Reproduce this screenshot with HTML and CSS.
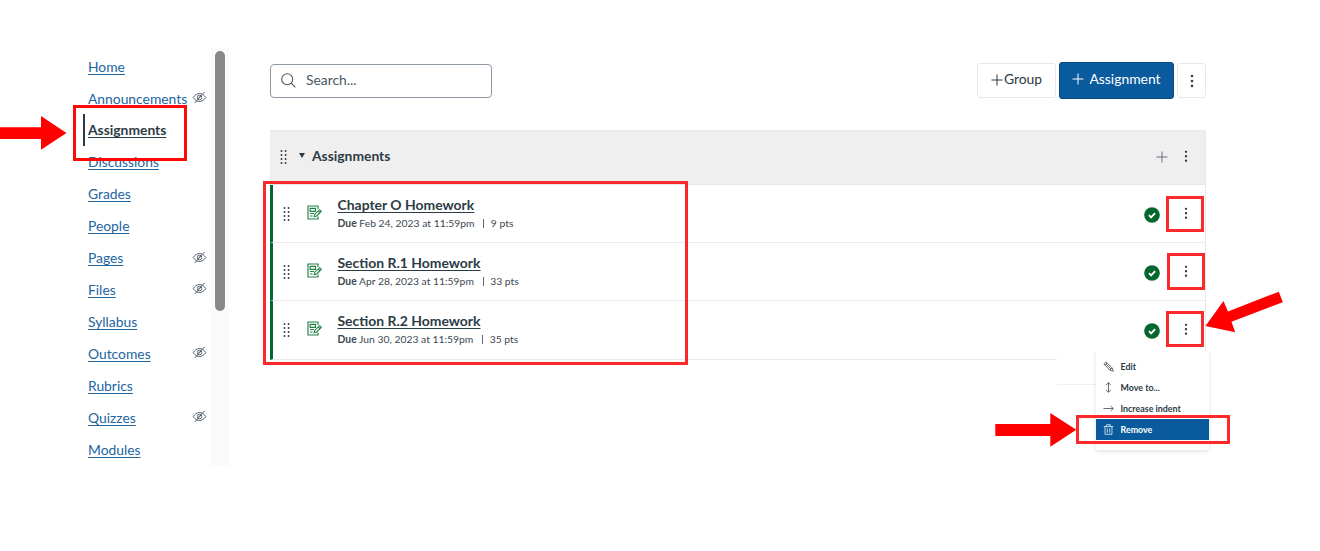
FILE: index.html
```
<!DOCTYPE html>
<html lang="en">
<head>
<meta charset="utf-8">
<title>Assignments</title>
<link rel="stylesheet" href="styles.css">
</head>
<body>
<svg width="0" height="0" class="defs" aria-hidden="true">
  <symbol id="hidden" viewBox="0 0 14 13"><g fill="none" stroke="currentColor" stroke-width="1"><path d="M.7 6.5C2.3 4.2 4.500 2.500 7 2.500s4.700 1.700 6.300 4C11.700 8.800 9.500 10.500 7 10.500S2.300 8.800.7 6.500z"/><ellipse cx="7" cy="6.500" rx="2.200" ry="2.400"/><path d="M2.300 12 12.200.8M5.800 7.300l2-2.200"/></g></symbol>
  <symbol id="grip" viewBox="0 0 7 14"><path d="M1.500 1v13M5.600 1v13" fill="none" stroke="currentColor" stroke-width="1.900" stroke-linecap="round" stroke-dasharray="0 4"/></symbol>
  <symbol id="kebab" viewBox="0 0 4 14"><g fill="currentColor"><circle cx="2" cy="2" r="1.300"/><circle cx="2" cy="7" r="1.300"/><circle cx="2" cy="12" r="1.300"/></g></symbol>
  <symbol id="plus" viewBox="0 0 12 12"><path d="M6 .5v11M.5 6h11" stroke="currentColor" stroke-width="1" fill="none"/></symbol>
  <symbol id="sheet" viewBox="0 0 15 15"><g fill="none" stroke="currentColor" stroke-width="1.150"><path d="M11 4V1H1v13h10v-2.500"/><path d="M3.200 3.300h5.300v3H3.200zM3 8.500h4M3 11h2.500"/><path d="m7.200 11.700.6-2.500 4.800-4.500 1.700 1.700-4.700 4.600zM11.200 6l1.600 1.700"/></g></symbol>
  <symbol id="check" viewBox="0 0 16 16"><circle cx="8" cy="8" r="7.800" fill="#03672e"/><path d="m5 8.200 2.100 2.100 4-4.200" fill="none" stroke="#fff" stroke-width="1.900"/></symbol>
</svg>
<div class="page">
  <nav class="sidebar">
    <a class="nav" href="#">Home</a>
    <a class="nav" href="#">Announcements<svg><use href="#hidden"/></svg></a>
    <a class="nav active" href="#">Assignments</a>
    <a class="nav" href="#">Discussions</a>
    <a class="nav" href="#">Grades</a>
    <a class="nav" href="#">People</a>
    <a class="nav" href="#">Pages<svg><use href="#hidden"/></svg></a>
    <a class="nav" href="#">Files<svg><use href="#hidden"/></svg></a>
    <a class="nav" href="#">Syllabus</a>
    <a class="nav" href="#">Outcomes<svg><use href="#hidden"/></svg></a>
    <a class="nav" href="#">Rubrics</a>
    <a class="nav" href="#">Quizzes<svg><use href="#hidden"/></svg></a>
    <a class="nav" href="#">Modules</a>
  </nav>
  <div class="track"><div class="thumb"></div></div>
  <main class="main">
    <div class="toolbar">
      <div class="search"><svg viewBox="0 0 15 15"><g fill="none" stroke="currentColor" stroke-width="1.100"><circle cx="6.200" cy="6.200" r="5.500"/><path d="m10.200 10.200 4.100 4.100"/></g></svg><span>Search...</span></div>
      <button class="btn group"><svg class="plus"><use href="#plus"/></svg><span>Group</span></button>
      <button class="btn primary"><svg class="plus"><use href="#plus"/></svg><span>Assignment</span></button>
      <button class="btn more"><svg class="kebab"><use href="#kebab"/></svg></button>
    </div>
    <section class="panel">
      <header class="head"><svg class="grip"><use href="#grip"/></svg><i class="caret"></i><h2>Assignments</h2><svg class="plus"><use href="#plus"/></svg><svg class="kebab"><use href="#kebab"/></svg></header>
      <article class="row"><svg class="grip"><use href="#grip"/></svg><svg class="sheet"><use href="#sheet"/></svg><div class="info"><a href="#">Chapter O Homework</a><p><b>Due</b> Feb 24, 2023 at 11:59pm <i></i> 9 pts</p></div><svg class="check"><use href="#check"/></svg><svg class="kebab"><use href="#kebab"/></svg></article>
      <article class="row"><svg class="grip"><use href="#grip"/></svg><svg class="sheet"><use href="#sheet"/></svg><div class="info"><a href="#">Section R.1 Homework</a><p><b>Due</b> Apr 28, 2023 at 11:59pm <i></i> 33 pts</p></div><svg class="check"><use href="#check"/></svg><svg class="kebab"><use href="#kebab"/></svg></article>
      <article class="row"><svg class="grip"><use href="#grip"/></svg><svg class="sheet"><use href="#sheet"/></svg><div class="info"><a href="#">Section R.2 Homework</a><p><b>Due</b> Jun 30, 2023 at 11:59pm <i></i> 35 pts</p></div><svg class="check"><use href="#check"/></svg><svg class="kebab"><use href="#kebab"/></svg></article>
    </section>
  </main>
</div>
<div class="popup">
  <div class="rules"></div>
  <div class="menu">
    <div class="item"><svg viewBox="0 0 12 12"><g fill="none" stroke="currentColor" stroke-width=".8"><path d="M1 3.200 3.200 1l6.800 6.500 1.200 3.700-3.700-1.200zM2.200 4.400l2.200-2.200M7.500 10 10 7.500M3.500 3.500l5.300 5.300"/></g></svg>Edit</div>
    <div class="item"><svg viewBox="0 0 12 12"><path d="M6 1v10M3.300 3.400 6 .8l2.700 2.600M3.300 8.600 6 11.200l2.700-2.600" fill="none" stroke="currentColor" stroke-width=".8"/></svg>Move to...</div>
    <div class="item"><svg viewBox="0 0 12 12"><path d="M.5 6h10.500M8.300 3.200 11.200 6 8.300 8.800" fill="none" stroke="currentColor" stroke-width=".8"/></svg>Increase indent</div>
    <div class="item selected"><svg viewBox="0 0 12 12"><path d="M.8 2.800h10.400M4 2.800V.8h4v2M2.200 2.800v8.400h7.600V2.800M4.700 4.700v4.800M7.300 4.700v4.800" fill="none" stroke="currentColor" stroke-width=".8"/></svg>Remove</div>
  </div>
</div>
<div class="mark mark-nav"></div>
<div class="mark mark-list"></div>
<div class="mark mark-k1"></div>
<div class="mark mark-k2"></div>
<div class="mark mark-k3"></div>
<div class="mark mark-remove"></div>
<svg class="arrows" viewBox="0 0 1320 551"><g fill="#fe0000"><path d="M0 127.300h41V116l25.500 17L41 149.800V139H0z"/><path d="M995.300 424h55V413l26 16.800-26 17V436h-55z"/><path d="M1205.500 326 1223.500 301l4.500 10.500 50.800-19.800 4 10.500-51.300 19.500 3.700 10.500z"/></g></svg>
</body>
</html>
```
FILE: styles.css
```
* { box-sizing: border-box; }
body { margin: 0; width: 1320px; height: 551px; overflow: hidden; background: #fff; color: #2d3b45; font-family: Lato, sans-serif; position: relative; }
svg { flex: none; display: block; }
.defs { position: absolute; }
a { color: inherit; }
h2, p { margin: 0; }
.page { display: flex; align-items: flex-start; padding: 48px 0 0 83px; }
.sidebar { width: 128px; padding-top: 2.200px; }
.nav { height: 31.92px; display: flex; align-items: center; justify-content: space-between; padding: 0 4px 0 5px; color: #22659f; font-size: 13.850px; text-decoration: underline; text-underline-offset: 2px; text-decoration-thickness: 1px; white-space: nowrap; }
.nav svg { width: 15px; height: 13px; color: #596570; margin-bottom: 1px; }
.nav.active { color: #2d3b45; font-weight: 700; border-left: 2px solid #2d3b45; padding-left: 3px; }
.track { width: 18px; height: 418px; padding: 3px 4px 0 3.500px; background: #fafafa; }
.thumb { height: 260px; border-radius: 6px; background: #888; }
.main { width: 936px; margin-left: 41px; padding-top: 14px; }
.toolbar { display: flex; align-items: center; height: 37px; }
.search { width: 222px; height: 34px; margin-right: auto; border: 1px solid #8d98a2; border-radius: 4px; display: flex; align-items: center; gap: 10px; padding: 0 10px 1px; font-size: 13.850px; color: #4a5862; }
.search svg { width: 15px; height: 15px; }
.search span { margin-bottom: 2px; }
.btn { height: 35px; padding: 0; background: #fff; border: 1px solid #e6e8ea; border-radius: 3px; display: flex; align-items: center; justify-content: center; font: 13.900px Lato, sans-serif; color: #2d3b45; }
.btn span { margin-bottom: 4px; }
.plus { width: 12px; height: 12px; }
.kebab { width: 4px; height: 14px; }
.group { width: 79px; gap: 1px; margin-right: 3px; }
.group .plus { margin-bottom: 1px; }
.primary { width: 115px; height: 37px; margin-right: 3px; gap: 5px; background: #0a5a9e; border-color: #084a82; color: #fff; padding-bottom: 3px; }
.primary span { margin-bottom: 2px; }
.more { width: 29px; }
.panel { margin-top: 31px; border-right: 1px solid #e6e8eb; }
.head { height: 55px; background: #efefef; border-top: 1px solid #e6e8eb; border-bottom: 1px solid #e6e8eb; display: flex; align-items: center; padding: 0 17px 2px 10px; }
.grip { width: 7px; height: 14px; }
.caret { margin: 0 7px 2px 12px; border: 3px solid transparent; border-top: 5px solid #2d3b45; border-bottom: 0; }
h2 { font-size: 13.850px; font-weight: 700; margin: 0 auto 2px 0; }
.head .plus { margin-right: 16px; color: #66717c; }
.head .kebab, .row .kebab { width: 4px; height: 12.500px; }
.row { height: 58px; border-left: 3px solid #03672e; border-bottom: 1px solid #e9ebed; display: flex; align-items: center; padding: 0 17px 0 10px; }
.row:last-child { height: 59px; padding-bottom: 1px; }
.sheet { width: 15px; height: 15px; color: #228048; margin: 0 16px 2px 16.500px; }
.info { margin: 0 auto 2px 0; }
.info a { display: block; font-size: 13.950px; line-height: 19px; font-weight: 700; text-underline-offset: 2px; text-decoration-thickness: 1px; white-space: nowrap; }
.info p { font-size: 10.350px; line-height: 14px; margin-top: 2px; white-space: nowrap; color: #3b4852; }
.info i { display: inline-block; height: 9px; border-left: 1px solid #5c6770; margin: 0 4px 0 6px; vertical-align: -1px; }
.check { width: 16px; height: 16px; margin: 3px 24px 0 0; }
.popup { position: absolute; left: 1057px; top: 351px; width: 160px; height: 104px; background: #fff; display: flex; overflow: hidden; }
.rules { width: 39px; height: 35px; margin-top: 33px; border-top: 1px solid #eef0f1; border-bottom: 1px solid #f6f7f7; }
.menu { width: 113px; height: 99px; padding-top: 5px; box-shadow: 0 1px 4px rgba(45,59,69,.18); background: #fff; }
.item { height: 21px; display: flex; align-items: center; gap: 6.500px; padding: 0 0 1px 7px; font-size: 8.900px; font-weight: 700; white-space: nowrap; }
.item svg { width: 11px; height: 11px; margin-top: 1px; }
.selected { background: #0a5a9e; color: #fff; }
.mark { position: absolute; border: 3px solid #fb2929; }
.mark-nav { left: 73px; top: 105px; width: 114px; height: 56px; border-color: #fe0808; }
.mark-list { left: 263px; top: 181px; width: 425px; height: 184px; }
.mark-k1 { left: 1166px; top: 196px; width: 38px; height: 36px; }
.mark-k2 { left: 1167px; top: 253px; width: 38px; height: 37px; }
.mark-k3 { left: 1166px; top: 311px; width: 38px; height: 36px; }
.mark-remove { left: 1076px; top: 415px; width: 154px; height: 29px; }
.arrows { position: absolute; left: 0; top: 0; width: 1320px; height: 551px; pointer-events: none; }
```
